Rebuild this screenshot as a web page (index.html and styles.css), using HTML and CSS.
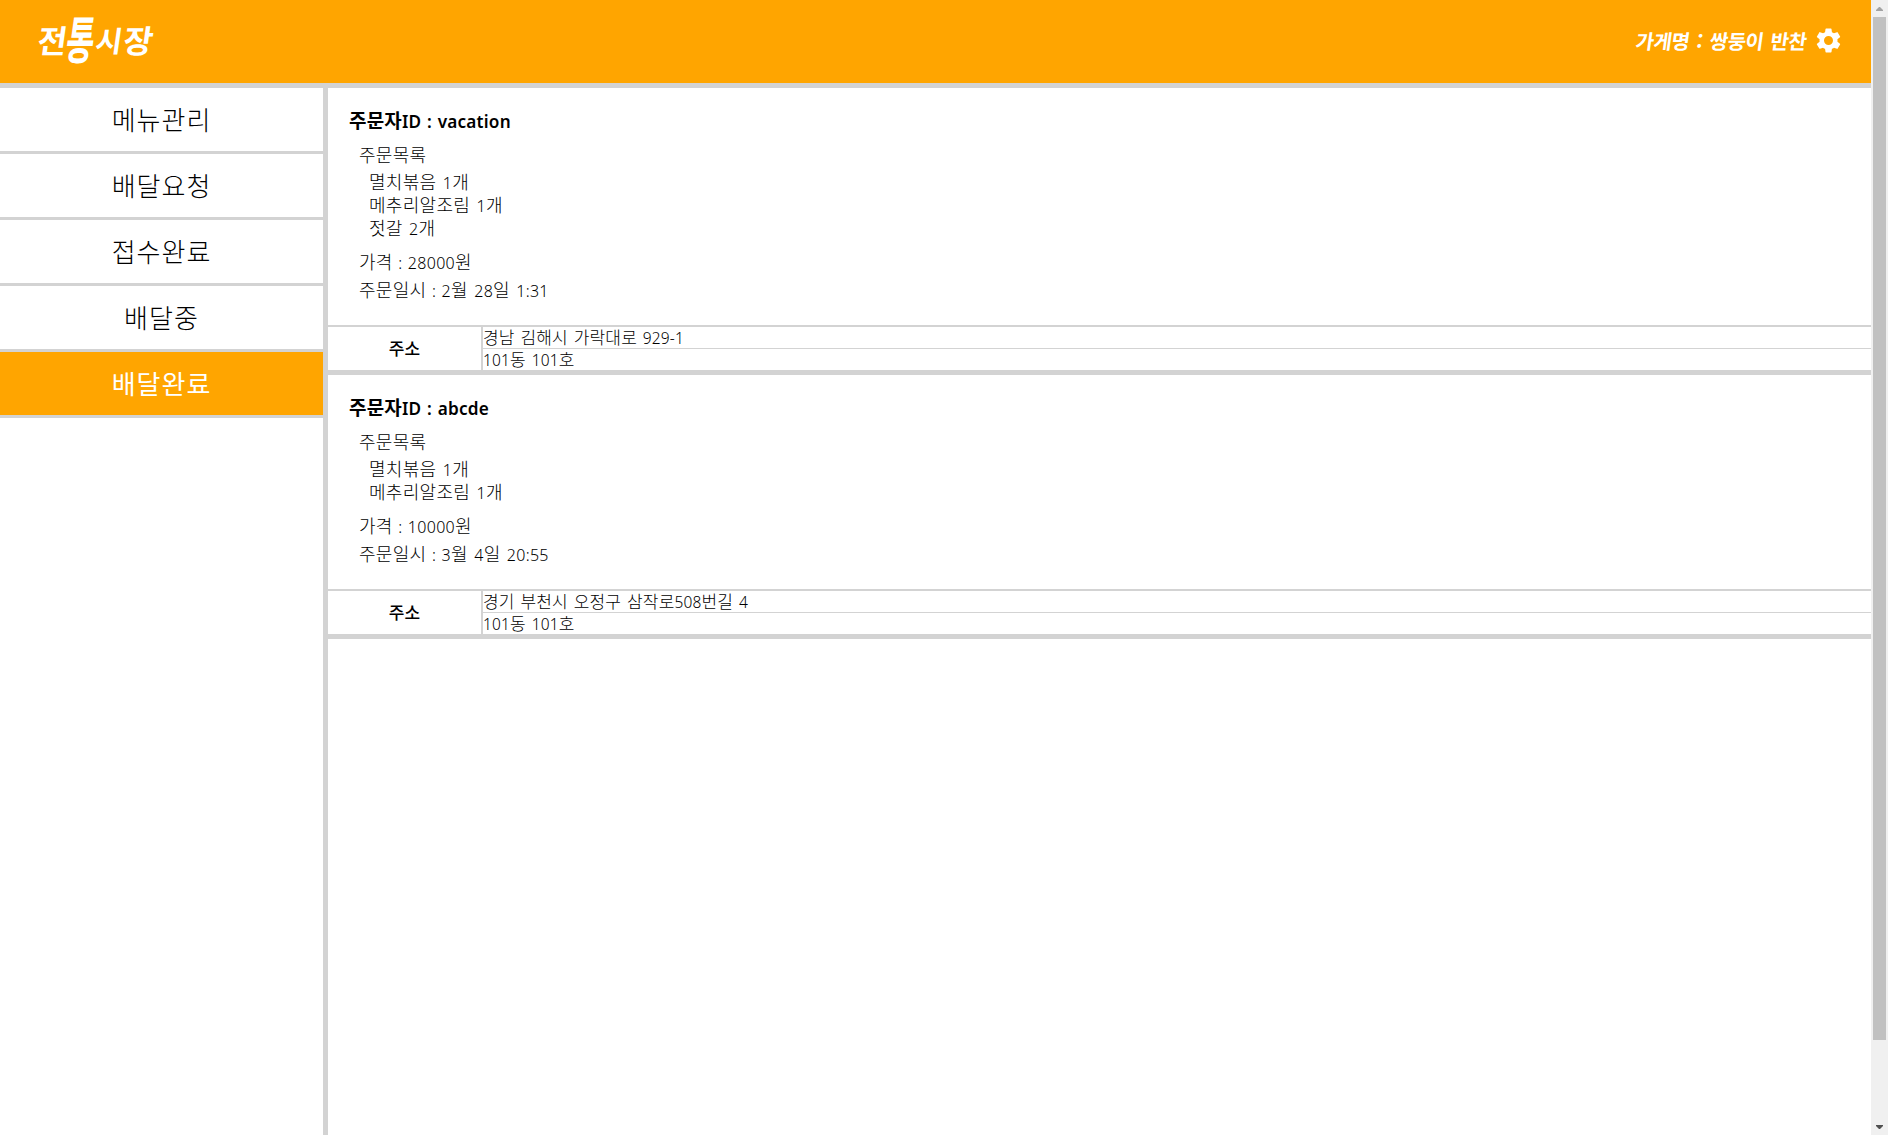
FILE: index.html
```
<!DOCTYPE html>
<html lang="ko">
<head>
<meta charset="utf-8">
<title>전통시장</title>
<link rel="stylesheet" href="styles.css">
</head>
<body>
<div class="page">
  <header class="header">
    <h1 class="logo"><span class="l1">전</span><span class="l2">통</span><span class="l3">시</span><span class="l4">장</span></h1>
    <div class="store">
      <span class="store-name">가게명 : 쌍둥이 반찬</span>
      <svg class="gear" viewBox="2 2 20 20"><path fill="#fff" d="M19.14 12.94c.04-.3.06-.61.06-.94 0-.32-.02-.64-.07-.94l2.03-1.58a.49.49 0 0 0 .12-.61l-1.92-3.32a.488.488 0 0 0-.59-.22l-2.39.96c-.5-.38-1.03-.7-1.62-.94l-.36-2.54a.484.484 0 0 0-.48-.41h-3.84c-.24 0-.43.17-.47.41l-.36 2.54c-.59.24-1.13.57-1.62.94l-2.39-.96c-.22-.08-.47 0-.59.22L2.74 8.87c-.12.21-.08.47.12.61l2.03 1.58c-.05.3-.09.63-.09.94s.02.64.07.94l-2.03 1.58a.49.49 0 0 0-.12.61l1.92 3.32c.12.22.37.29.59.22l2.39-.96c.5.38 1.03.7 1.62.94l.36 2.54c.05.24.24.41.48.41h3.84c.24 0 .44-.17.47-.41l.36-2.54c.59-.24 1.13-.56 1.62-.94l2.39.96c.22.08.47 0 .59-.22l1.92-3.32c.12-.22.07-.47-.12-.61l-2.01-1.58zM12 15.6A3.6 3.6 0 1 1 12 8.4a3.6 3.6 0 0 1 0 7.200z"/></svg>
    </div>
  </header>
  <div class="body">
    <nav class="menu">
      <a>메뉴관리</a>
      <a>배달요청</a>
      <a>접수완료</a>
      <a>배달중</a>
      <a class="active">배달완료</a>
    </nav>
    <main class="orders">
      <section class="order">
        <div class="info">
          <h3>주문자<span class="n">ID : vacation</span></h3>
          <p class="list-title">주문목록</p>
          <ul>
            <li>멸치볶음 <span class="n">1</span>개</li>
            <li>메추리알조림 <span class="n">1</span>개</li>
            <li>젓갈 <span class="n">2</span>개</li>
          </ul>
          <p class="price">가격<span class="n"> : 28000</span>원</p>
          <p>주문일시<span class="n"> : 2</span>월 <span class="n">28</span>일 <span class="n">1:31</span></p>
        </div>
        <div class="address">
          <div class="label">주소</div>
          <div class="lines">
            <div>경남 김해시 가락대로 <span class="n">929-1</span></div>
            <div><span class="n">101</span>동 <span class="n">101</span>호</div>
          </div>
        </div>
      </section>
      <section class="order">
        <div class="info">
          <h3>주문자<span class="n">ID : abcde</span></h3>
          <p class="list-title">주문목록</p>
          <ul>
            <li>멸치볶음 <span class="n">1</span>개</li>
            <li>메추리알조림 <span class="n">1</span>개</li>
          </ul>
          <p class="price">가격<span class="n"> : 10000</span>원</p>
          <p>주문일시<span class="n"> : 3</span>월 <span class="n">4</span>일 <span class="n">20:55</span></p>
        </div>
        <div class="address">
          <div class="label">주소</div>
          <div class="lines">
            <div>경기 부천시 오정구 삼작로<span class="n">508</span>번길 <span class="n">4</span></div>
            <div><span class="n">101</span>동 <span class="n">101</span>호</div>
          </div>
        </div>
      </section>
    </main>
  </div>
</div>
<div class="scrollbar">
  <svg viewBox="0 0 7 4"><path fill="#a3a3a3" d="M0 4V3L3 0h1l3 3v1z"/></svg>
  <div class="thumb"></div>
  <svg viewBox="0 0 7 4"><path fill="#505050" d="M0 0v1l3 3h1l3-3V0z"/></svg>
</div>
</body>
</html>
```
FILE: styles.css
```
* { box-sizing: border-box; margin: 0; padding: 0; }
body {
  display: flex;
  height: 1135px;
  overflow: hidden;
  background: #fff;
  color: #000;
  font-family: "Noto Sans CJK KR", sans-serif;
}
.page { flex: 1; display: flex; flex-direction: column; }
.header {
  height: 88px;
  flex: none;
  display: flex;
  justify-content: space-between;
  background: #ffa500;
  border-bottom: 5px solid #d3d3d3;
  color: #fff;
  padding: 0 30px 0 38px;
}
.logo { display: flex; height: 78px; line-height: 78px; font-size: 32px; font-weight: 700; transform: skewX(-8deg); }
.logo span { width: 29px; text-align: center; }
.logo .l2 { font-size: 51px; line-height: 75px; width: 28px; transform: scaleX(.6); display: flex; justify-content: center; }
.logo .l3 { font-size: 29px; }
.logo .l4 { font-size: 32px; }
.store { display: flex; align-items: center; gap: 9px; height: 81px; }
.store-name { font-size: 20px; font-weight: 700; letter-spacing: -.5px; word-spacing: 2px; transform: skewX(-8deg); }
.gear { width: 25px; height: 25px; }
.body { flex: 1; display: flex; }
.menu { width: 328px; border-right: 5px solid #d3d3d3; }
.menu a {
  display: block;
  height: 66px;
  line-height: 61px;
  border-bottom: 3px solid #d3d3d3;
  text-align: center;
  font-size: 26px;
  font-weight: 300;
  letter-spacing: 1px;
}
.menu .active { background: #ffa500; color: #fff; font-weight: 400; }
.orders { flex: 1; }
.order { border-bottom: 5px solid #d3d3d3; }
.info { padding: 20px 21px 24px; font-size: 18px; font-weight: 300; line-height: 23px; letter-spacing: .3px; word-spacing: 1px; }
.n { font-family: "Noto Sans", sans-serif; font-size: 16px; font-weight: 300; }
.info h3 { height: 24px; line-height: 24px; font-size: 19px; font-weight: 700; letter-spacing: .2px; }
.info h3 .n { font-size: 17.2px; font-weight: 600; }
.info p { height: 23px; margin: 0 10px; }
.info .list-title { margin-top: 11px; margin-bottom: 4px; }
.info ul { list-style: none; margin: 0 20px 11px; }
.info li { height: 23px; }
.info .price { margin-bottom: 5px; }
.address { display: flex; height: 45px; border-top: 2px solid #d3d3d3; font-size: 17px; font-weight: 300; word-spacing: 1px; letter-spacing: .15px; }
.label { width: 155px; border-right: 2px solid #d3d3d3; text-align: center; line-height: 41px; font-weight: 500; font-size: 17px; }
.lines { flex: 1; }
.lines div { height: 21px; line-height: 19px; }
.lines div:first-child { height: 22px; line-height: 20px; border-bottom: 1px solid #d3d3d3; }
.lines .n { font-size: 15.5px; }
.scrollbar {
  width: 17px;
  display: flex;
  flex-direction: column;
  align-items: center;
  justify-content: space-between;
  background: #f0f0f0;
  padding: 7px 0 6px;
}
.scrollbar svg { width: 7px; height: 4px; flex: none; }
.thumb { width: 13px; height: 1023px; background: #c1c1c1; margin: 6px 0 auto; }
```
